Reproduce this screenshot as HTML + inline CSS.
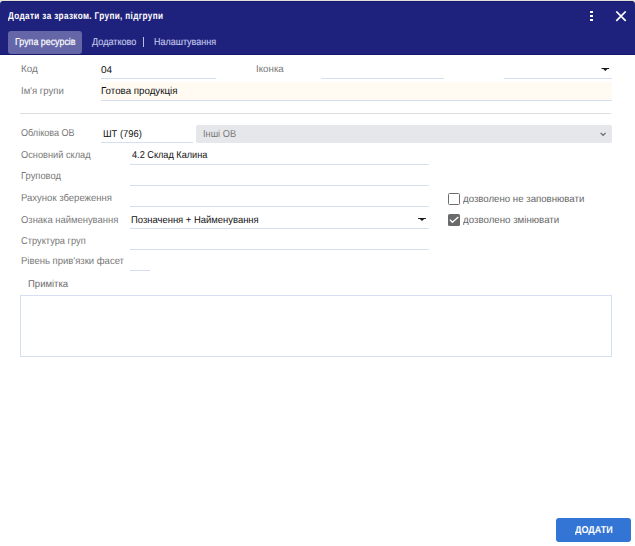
<!DOCTYPE html>
<html><head><meta charset="utf-8">
<style>
html,body{margin:0;padding:0;width:635px;height:546px;overflow:hidden;background:#fff;}
body{font-family:"Liberation Sans",sans-serif;position:relative;}
.bgtop{position:absolute;left:0;top:0;width:635px;height:6px;background:#e2e2db;}
.hdr{position:absolute;left:0;top:1px;width:635px;height:54px;background:#1f227c;border-radius:4px 4px 0 0;box-shadow:inset 0 1px 0 #17196f;}
.hdrb{position:absolute;left:0;top:54px;width:635px;height:1px;background:#16186e;}
.t{position:absolute;white-space:nowrap;line-height:20px;font-size:10px;transform-origin:0 0;text-rendering:geometricPrecision;}
.title{font-weight:bold;color:#fff;letter-spacing:0.45px;}
.tab{position:absolute;left:8px;top:31px;width:74px;height:23px;border-radius:3px;background:#6466a8;}
.tabt{color:#fff;-webkit-text-stroke:0.2px #fff;}
.tabi{color:#c0c5e9;-webkit-text-stroke:0.15px #c0c5e9;}
.lbl{color:#787878;}
.val{color:#111111;}
.chk{color:#666666;}
.note{color:#6a6a6a;}
.btn{color:#fff;font-weight:bold;}
.ul{position:absolute;height:1px;background:#d4e0f1;}
.sep{position:absolute;height:1px;background:#dedede;}
</style></head><body>
<div class="bgtop"></div>
<div class="hdr"></div>
<div class="hdrb"></div>
<div class="tab"></div>
<span style="position:absolute;left:143px;top:37px;width:1px;height:10px;background:#b9bfe6"></span>
<svg style="position:absolute;left:589px;top:11px" width="6" height="12" viewBox="0 0 6 12">
  <rect x="1" y="0" width="3" height="2" fill="#fff"/>
  <rect x="1" y="4" width="3" height="2" fill="#fff"/>
  <rect x="1" y="8" width="3" height="2" fill="#fff"/>
</svg>
<svg style="position:absolute;left:615px;top:11px" width="12" height="11" viewBox="0 0 12 11">
  <path d="M1.3 0.5 L10.7 9.9 M10.7 0.5 L1.3 9.9" stroke="#fff" stroke-width="1.7"/>
</svg>

<div class="ul" style="left:101px;top:78px;width:115px"></div>
<div class="ul" style="left:321px;top:78px;width:123px"></div>
<div class="ul" style="left:504px;top:78px;width:108px"></div>
<svg style="position:absolute;left:601px;top:68px" width="9" height="4" viewBox="0 0 9 4"><path d="M0.5 0 H8.1 V0.9 H6.4 L4.3 3 L2.2 0.9 H0.5 Z" fill="#1a1a1a"/></svg>

<div style="position:absolute;left:101px;top:82px;width:511px;height:18px;background:#fffbf3"></div>
<div class="ul" style="left:101px;top:100px;width:511px"></div>

<div class="sep" style="left:20px;top:113px;width:591px"></div>

<div class="ul" style="left:101px;top:142px;width:92px"></div>
<div style="position:absolute;left:196px;top:125px;width:416px;height:18px;background:#e6e7ea;border-radius:2px"></div>
<svg style="position:absolute;left:600px;top:132px" width="7" height="5" viewBox="0 0 7 5"><path d="M0.6 0.9 L3.1 3.3 L5.6 0.9" stroke="#6a6a6a" stroke-width="1.25" fill="none"/></svg>

<div class="ul" style="left:130px;top:164px;width:299px"></div>
<div class="ul" style="left:130px;top:185px;width:299px"></div>
<div class="ul" style="left:130px;top:206px;width:299px"></div>
<div class="ul" style="left:130px;top:228px;width:299px"></div>
<svg style="position:absolute;left:418px;top:218px" width="9" height="4" viewBox="0 0 9 4"><path d="M0.1 0 H7.9 V0.9 H6.1 L4 3 L1.9 0.9 H0.1 Z" fill="#1a1a1a"/></svg>
<div class="ul" style="left:130px;top:249px;width:299px"></div>
<div class="ul" style="left:130px;top:270px;width:20px"></div>

<div style="position:absolute;left:448px;top:193px;width:10px;height:10px;border:1px solid #6c6c6c;border-radius:1.5px"></div>
<div style="position:absolute;left:448px;top:214px;width:12px;height:12px;background:#6a6a6a;border-radius:1.5px"></div>
<svg style="position:absolute;left:448px;top:214px" width="12" height="12" viewBox="0 0 12 12"><path d="M1.9 5.6 L4.4 8.3 L10.3 3.0" stroke="#fff" stroke-width="1.35" fill="none"/></svg>

<div style="position:absolute;left:20px;top:295px;width:590px;height:60px;border:1px solid #d4e0f1"></div>

<div style="position:absolute;left:556px;top:518px;width:75px;height:24px;background:#3375d5;border-radius:3px"></div>
<span class="t title" style="left:8.0px;top:7.0px;transform:scaleX(0.815)">Додати за зразком. Групи, підгрупи</span>
<span class="t tabt" style="left:15.0px;top:33.0px;transform:scaleX(0.888)">Група ресурсів</span>
<span class="t tabi" style="left:92.0px;top:33.0px;transform:scaleX(0.91)">Додатково</span>
<span class="t tabi" style="left:154.0px;top:33.0px;transform:scaleX(0.897)">Налаштування</span>
<span class="t lbl" style="left:21.0px;top:60.0px;transform:scaleX(0.988)">Код</span>
<span class="t val" style="left:101.0px;top:61.0px;transform:scaleX(1.0)">04</span>
<span class="t lbl" style="left:255.7px;top:60.0px;transform:scaleX(0.975)">Іконка</span>
<span class="t lbl" style="left:21.0px;top:82.0px;transform:scaleX(0.955)">Ім'я групи</span>
<span class="t val" style="left:101.3px;top:82.0px;transform:scaleX(0.974)">Готова продукція</span>
<span class="t lbl" style="left:20.7px;top:124.0px;transform:scaleX(0.907)">Облікова ОВ</span>
<span class="t val" style="left:102.8px;top:125.0px;transform:scaleX(0.94)">ШТ (796)</span>
<span class="t lbl" style="left:203.2px;top:125.0px;transform:scaleX(0.926)">Інші ОВ</span>
<span class="t lbl" style="left:21.0px;top:146.0px;transform:scaleX(0.924)">Основний склад</span>
<span class="t val" style="left:131.9px;top:146.0px;transform:scaleX(0.916)">4.2 Склад Калина</span>
<span class="t lbl" style="left:21.0px;top:167.0px;transform:scaleX(0.936)">Груповод</span>
<span class="t lbl" style="left:21.0px;top:189.0px;transform:scaleX(0.952)">Рахунок збереження</span>
<span class="t lbl" style="left:21.0px;top:210.5px;transform:scaleX(0.942)">Ознака найменування</span>
<span class="t val" style="left:130.5px;top:211.0px;transform:scaleX(0.944)">Позначення + Найменування</span>
<span class="t lbl" style="left:21.0px;top:232.0px;transform:scaleX(0.928)">Структура груп</span>
<span class="t lbl" style="left:21.0px;top:252.0px;transform:scaleX(0.951)">Рівень прив'язки фасет</span>
<span class="t chk" style="left:462.6px;top:189.8px;transform:scaleX(0.965)">дозволено не заповнювати</span>
<span class="t chk" style="left:462.6px;top:210.8px;transform:scaleX(0.971)">дозволено змінювати</span>
<span class="t note" style="left:27.8px;top:275.3px;transform:scaleX(0.952)">Примітка</span>
<span class="t btn" style="left:574.5px;top:521.3px;transform:scaleX(0.9)">ДОДАТИ</span>
</body></html>
